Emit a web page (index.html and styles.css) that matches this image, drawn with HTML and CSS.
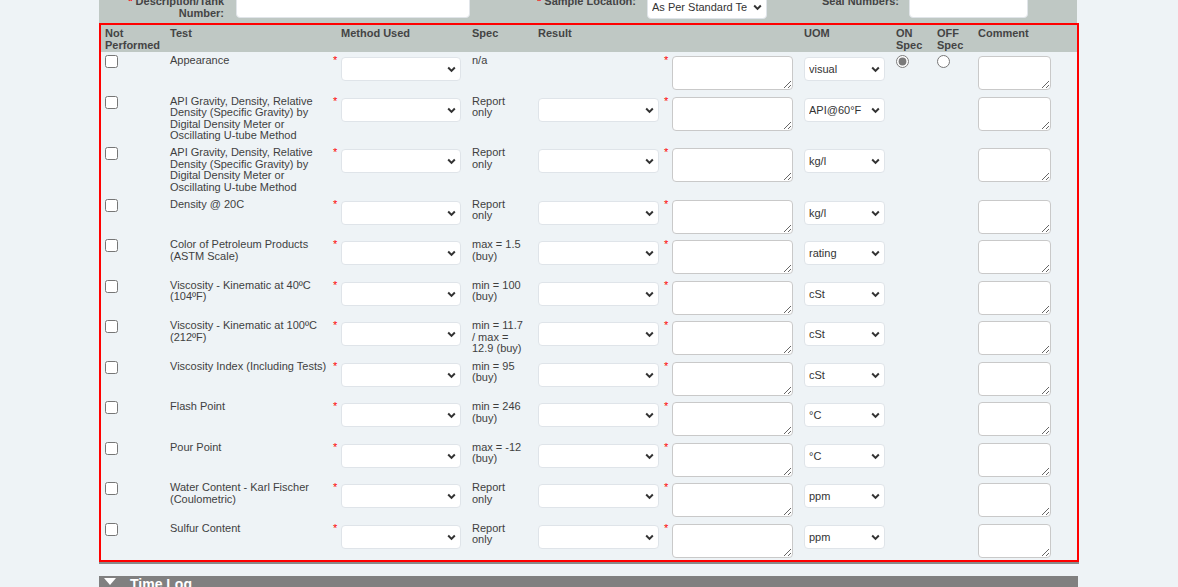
FILE: index.html
```html
<!DOCTYPE html>
<html lang="en">
<head>
<meta charset="utf-8">
<title>Test Results</title>
<link rel="stylesheet" href="styles.css">
</head>
<body>
<div class="page">
  <div class="topbar">
    <div class="tlabel l1"><span class="req">*</span> Description/Tank Number:</div>
    <input class="tinput i1" type="text">
    <div class="tlabel l2"><span class="req">*</span> Sample Location:</div>
    <div class="sel tsel">
      <select class="selbox"><option>As Per Standard Terminal Procedure</option></select>
      <svg class="chev" viewBox="0 0 10 7"><path d="M1.3 1.3 L5 5 L8.7 1.3"/></svg>
    </div>
    <div class="tlabel l3">Seal Numbers:</div>
    <input class="tinput i3" type="text">
  </div>

  <div class="grid">
    <div class="row head">
      <div class="c">Not Performed</div>
      <div class="c">Test</div>
      <div class="c"></div>
      <div class="c p0">Method Used</div>
      <div class="c">Spec</div>
      <div class="c">Result</div>
      <div class="c"></div>
      <div class="c p0"></div>
      <div class="c">UOM</div>
      <div class="c">ON Spec</div>
      <div class="c">OFF Spec</div>
      <div class="c">Comment</div>
    </div>

    <div class="row brow">
      <div class="c"><input type="checkbox" class="cb"></div>
      <div class="c test">Appearance</div>
      <div class="c ast">*</div>
      <div class="c p0"><div class="sel w120"><select class="selbox"><option></option></select><svg class="chev" viewBox="0 0 10 7"><path d="M1.3 1.3 L5 5 L8.7 1.3"/></svg></div></div>
      <div class="c spec">n/a</div>
      <div class="c"></div>
      <div class="c ast a2">*</div>
      <div class="c p0"><textarea class="ta w121"></textarea></div>
      <div class="c"><div class="sel w81"><select class="selbox"><option>visual</option></select><svg class="chev" viewBox="0 0 10 7"><path d="M1.3 1.3 L5 5 L8.7 1.3"/></svg></div></div>
      <div class="c"><input type="radio" name="spec1" class="rd" checked></div>
      <div class="c"><input type="radio" name="spec1" class="rd"></div>
      <div class="c"><textarea class="ta w73"></textarea></div>
    </div>

    <div class="row brow">
      <div class="c"><input type="checkbox" class="cb"></div>
      <div class="c test">API Gravity, Density, Relative Density (Specific Gravity) by Digital Density Meter or Oscillating U-tube Method</div>
      <div class="c ast">*</div>
      <div class="c p0"><div class="sel w120"><select class="selbox"><option></option></select><svg class="chev" viewBox="0 0 10 7"><path d="M1.3 1.3 L5 5 L8.7 1.3"/></svg></div></div>
      <div class="c spec">Report only</div>
      <div class="c"><div class="sel w121"><select class="selbox"><option></option></select><svg class="chev" viewBox="0 0 10 7"><path d="M1.3 1.3 L5 5 L8.7 1.3"/></svg></div></div>
      <div class="c ast a2">*</div>
      <div class="c p0"><textarea class="ta w121"></textarea></div>
      <div class="c"><div class="sel w81"><select class="selbox"><option>API@60°F</option></select><svg class="chev" viewBox="0 0 10 7"><path d="M1.3 1.3 L5 5 L8.7 1.3"/></svg></div></div>
      <div class="c"></div>
      <div class="c"></div>
      <div class="c"><textarea class="ta w73"></textarea></div>
    </div>

    <div class="row brow">
      <div class="c"><input type="checkbox" class="cb"></div>
      <div class="c test">API Gravity, Density, Relative Density (Specific Gravity) by Digital Density Meter or Oscillating U-tube Method</div>
      <div class="c ast">*</div>
      <div class="c p0"><div class="sel w120"><select class="selbox"><option></option></select><svg class="chev" viewBox="0 0 10 7"><path d="M1.3 1.3 L5 5 L8.7 1.3"/></svg></div></div>
      <div class="c spec">Report only</div>
      <div class="c"><div class="sel w121"><select class="selbox"><option></option></select><svg class="chev" viewBox="0 0 10 7"><path d="M1.3 1.3 L5 5 L8.7 1.3"/></svg></div></div>
      <div class="c ast a2">*</div>
      <div class="c p0"><textarea class="ta w121"></textarea></div>
      <div class="c"><div class="sel w81"><select class="selbox"><option>kg/l</option></select><svg class="chev" viewBox="0 0 10 7"><path d="M1.3 1.3 L5 5 L8.7 1.3"/></svg></div></div>
      <div class="c"></div>
      <div class="c"></div>
      <div class="c"><textarea class="ta w73"></textarea></div>
    </div>

    <div class="row brow">
      <div class="c"><input type="checkbox" class="cb"></div>
      <div class="c test">Density @ 20C</div>
      <div class="c ast">*</div>
      <div class="c p0"><div class="sel w120"><select class="selbox"><option></option></select><svg class="chev" viewBox="0 0 10 7"><path d="M1.3 1.3 L5 5 L8.7 1.3"/></svg></div></div>
      <div class="c spec">Report only</div>
      <div class="c"><div class="sel w121"><select class="selbox"><option></option></select><svg class="chev" viewBox="0 0 10 7"><path d="M1.3 1.3 L5 5 L8.7 1.3"/></svg></div></div>
      <div class="c ast a2">*</div>
      <div class="c p0"><textarea class="ta w121"></textarea></div>
      <div class="c"><div class="sel w81"><select class="selbox"><option>kg/l</option></select><svg class="chev" viewBox="0 0 10 7"><path d="M1.3 1.3 L5 5 L8.7 1.3"/></svg></div></div>
      <div class="c"></div>
      <div class="c"></div>
      <div class="c"><textarea class="ta w73"></textarea></div>
    </div>

    <div class="row brow">
      <div class="c"><input type="checkbox" class="cb"></div>
      <div class="c test">Color of Petroleum Products (ASTM Scale)</div>
      <div class="c ast">*</div>
      <div class="c p0"><div class="sel w120"><select class="selbox"><option></option></select><svg class="chev" viewBox="0 0 10 7"><path d="M1.3 1.3 L5 5 L8.7 1.3"/></svg></div></div>
      <div class="c spec">max = 1.5 (buy)</div>
      <div class="c"><div class="sel w121"><select class="selbox"><option></option></select><svg class="chev" viewBox="0 0 10 7"><path d="M1.3 1.3 L5 5 L8.7 1.3"/></svg></div></div>
      <div class="c ast a2">*</div>
      <div class="c p0"><textarea class="ta w121"></textarea></div>
      <div class="c"><div class="sel w81"><select class="selbox"><option>rating</option></select><svg class="chev" viewBox="0 0 10 7"><path d="M1.3 1.3 L5 5 L8.7 1.3"/></svg></div></div>
      <div class="c"></div>
      <div class="c"></div>
      <div class="c"><textarea class="ta w73"></textarea></div>
    </div>

    <div class="row brow">
      <div class="c"><input type="checkbox" class="cb"></div>
      <div class="c test">Viscosity - Kinematic at 40ºC (104ºF)</div>
      <div class="c ast">*</div>
      <div class="c p0"><div class="sel w120"><select class="selbox"><option></option></select><svg class="chev" viewBox="0 0 10 7"><path d="M1.3 1.3 L5 5 L8.7 1.3"/></svg></div></div>
      <div class="c spec">min = 100 (buy)</div>
      <div class="c"><div class="sel w121"><select class="selbox"><option></option></select><svg class="chev" viewBox="0 0 10 7"><path d="M1.3 1.3 L5 5 L8.7 1.3"/></svg></div></div>
      <div class="c ast a2">*</div>
      <div class="c p0"><textarea class="ta w121"></textarea></div>
      <div class="c"><div class="sel w81"><select class="selbox"><option>cSt</option></select><svg class="chev" viewBox="0 0 10 7"><path d="M1.3 1.3 L5 5 L8.7 1.3"/></svg></div></div>
      <div class="c"></div>
      <div class="c"></div>
      <div class="c"><textarea class="ta w73"></textarea></div>
    </div>

    <div class="row brow">
      <div class="c"><input type="checkbox" class="cb"></div>
      <div class="c test">Viscosity - Kinematic at 100ºC (212ºF)</div>
      <div class="c ast">*</div>
      <div class="c p0"><div class="sel w120"><select class="selbox"><option></option></select><svg class="chev" viewBox="0 0 10 7"><path d="M1.3 1.3 L5 5 L8.7 1.3"/></svg></div></div>
      <div class="c spec">min = 11.7 / max = 12.9 (buy)</div>
      <div class="c"><div class="sel w121"><select class="selbox"><option></option></select><svg class="chev" viewBox="0 0 10 7"><path d="M1.3 1.3 L5 5 L8.7 1.3"/></svg></div></div>
      <div class="c ast a2">*</div>
      <div class="c p0"><textarea class="ta w121"></textarea></div>
      <div class="c"><div class="sel w81"><select class="selbox"><option>cSt</option></select><svg class="chev" viewBox="0 0 10 7"><path d="M1.3 1.3 L5 5 L8.7 1.3"/></svg></div></div>
      <div class="c"></div>
      <div class="c"></div>
      <div class="c"><textarea class="ta w73"></textarea></div>
    </div>

    <div class="row brow">
      <div class="c"><input type="checkbox" class="cb"></div>
      <div class="c test">Viscosity Index (Including Tests)</div>
      <div class="c ast">*</div>
      <div class="c p0"><div class="sel w120"><select class="selbox"><option></option></select><svg class="chev" viewBox="0 0 10 7"><path d="M1.3 1.3 L5 5 L8.7 1.3"/></svg></div></div>
      <div class="c spec">min = 95 (buy)</div>
      <div class="c"><div class="sel w121"><select class="selbox"><option></option></select><svg class="chev" viewBox="0 0 10 7"><path d="M1.3 1.3 L5 5 L8.7 1.3"/></svg></div></div>
      <div class="c ast a2">*</div>
      <div class="c p0"><textarea class="ta w121"></textarea></div>
      <div class="c"><div class="sel w81"><select class="selbox"><option>cSt</option></select><svg class="chev" viewBox="0 0 10 7"><path d="M1.3 1.3 L5 5 L8.7 1.3"/></svg></div></div>
      <div class="c"></div>
      <div class="c"></div>
      <div class="c"><textarea class="ta w73"></textarea></div>
    </div>

    <div class="row brow">
      <div class="c"><input type="checkbox" class="cb"></div>
      <div class="c test">Flash Point</div>
      <div class="c ast">*</div>
      <div class="c p0"><div class="sel w120"><select class="selbox"><option></option></select><svg class="chev" viewBox="0 0 10 7"><path d="M1.3 1.3 L5 5 L8.7 1.3"/></svg></div></div>
      <div class="c spec">min = 246 (buy)</div>
      <div class="c"><div class="sel w121"><select class="selbox"><option></option></select><svg class="chev" viewBox="0 0 10 7"><path d="M1.3 1.3 L5 5 L8.7 1.3"/></svg></div></div>
      <div class="c ast a2">*</div>
      <div class="c p0"><textarea class="ta w121"></textarea></div>
      <div class="c"><div class="sel w81"><select class="selbox"><option>°C</option></select><svg class="chev" viewBox="0 0 10 7"><path d="M1.3 1.3 L5 5 L8.7 1.3"/></svg></div></div>
      <div class="c"></div>
      <div class="c"></div>
      <div class="c"><textarea class="ta w73"></textarea></div>
    </div>

    <div class="row brow">
      <div class="c"><input type="checkbox" class="cb"></div>
      <div class="c test">Pour Point</div>
      <div class="c ast">*</div>
      <div class="c p0"><div class="sel w120"><select class="selbox"><option></option></select><svg class="chev" viewBox="0 0 10 7"><path d="M1.3 1.3 L5 5 L8.7 1.3"/></svg></div></div>
      <div class="c spec">max = -12 (buy)</div>
      <div class="c"><div class="sel w121"><select class="selbox"><option></option></select><svg class="chev" viewBox="0 0 10 7"><path d="M1.3 1.3 L5 5 L8.7 1.3"/></svg></div></div>
      <div class="c ast a2">*</div>
      <div class="c p0"><textarea class="ta w121"></textarea></div>
      <div class="c"><div class="sel w81"><select class="selbox"><option>°C</option></select><svg class="chev" viewBox="0 0 10 7"><path d="M1.3 1.3 L5 5 L8.7 1.3"/></svg></div></div>
      <div class="c"></div>
      <div class="c"></div>
      <div class="c"><textarea class="ta w73"></textarea></div>
    </div>

    <div class="row brow">
      <div class="c"><input type="checkbox" class="cb"></div>
      <div class="c test">Water Content - Karl Fischer (Coulometric)</div>
      <div class="c ast">*</div>
      <div class="c p0"><div class="sel w120"><select class="selbox"><option></option></select><svg class="chev" viewBox="0 0 10 7"><path d="M1.3 1.3 L5 5 L8.7 1.3"/></svg></div></div>
      <div class="c spec">Report only</div>
      <div class="c"><div class="sel w121"><select class="selbox"><option></option></select><svg class="chev" viewBox="0 0 10 7"><path d="M1.3 1.3 L5 5 L8.7 1.3"/></svg></div></div>
      <div class="c ast a2">*</div>
      <div class="c p0"><textarea class="ta w121"></textarea></div>
      <div class="c"><div class="sel w81"><select class="selbox"><option>ppm</option></select><svg class="chev" viewBox="0 0 10 7"><path d="M1.3 1.3 L5 5 L8.7 1.3"/></svg></div></div>
      <div class="c"></div>
      <div class="c"></div>
      <div class="c"><textarea class="ta w73"></textarea></div>
    </div>

    <div class="row brow">
      <div class="c"><input type="checkbox" class="cb"></div>
      <div class="c test">Sulfur Content</div>
      <div class="c ast">*</div>
      <div class="c p0"><div class="sel w120"><select class="selbox"><option></option></select><svg class="chev" viewBox="0 0 10 7"><path d="M1.3 1.3 L5 5 L8.7 1.3"/></svg></div></div>
      <div class="c spec">Report only</div>
      <div class="c"><div class="sel w121"><select class="selbox"><option></option></select><svg class="chev" viewBox="0 0 10 7"><path d="M1.3 1.3 L5 5 L8.7 1.3"/></svg></div></div>
      <div class="c ast a2">*</div>
      <div class="c p0"><textarea class="ta w121"></textarea></div>
      <div class="c"><div class="sel w81"><select class="selbox"><option>ppm</option></select><svg class="chev" viewBox="0 0 10 7"><path d="M1.3 1.3 L5 5 L8.7 1.3"/></svg></div></div>
      <div class="c"></div>
      <div class="c"></div>
      <div class="c"><textarea class="ta w73"></textarea></div>
    </div>
  </div>

  <div class="timelog">
    <span class="tri"></span>
    <span class="tltext">Time Log</span>
  </div>
</div>
</body>
</html>
```

FILE: styles.css
```css
* { box-sizing: border-box; }

html, body {
  margin: 0;
  background: #eef3f6;
  font-family: "Liberation Sans", Arial, sans-serif;
  font-size: 11px;
  color: #444;
}

.page {
  width: 980px;
  margin: -8px auto 0;
}

/* top form strip */
.topbar {
  display: flex;
  align-items: flex-start;
  background: #bfc8c4;
  padding: 1px 0 4px;
  width: 978px;
}

.tlabel {
  font-weight: bold;
  text-align: right;
  line-height: 12px;
  margin-top: 1.5px;
  color: #444;
}

.req { color: #ff0000; }

.l1 { width: 125px; }
.l2 { width: 166px; }
.l3 { width: 132px; }

.tinput {
  height: 24px;
  margin-top: 1px;
  background: #fff;
  border: 1px solid #e1e5e9;
  border-radius: 4px;
  outline: none;
}

.i1 { width: 234px; margin-left: 12px; }
.i3 { width: 119px; margin-left: 10px; }

.tsel {
  width: 120px;
  margin-left: 11px;
  margin-top: 2px;
}

/* custom select */
.sel {
  position: relative;
  height: 24px;
}

.selbox {
  -webkit-appearance: none;
  appearance: none;
  width: 100%;
  height: 100%;
  margin: 0;
  padding: 0 19px 0 4px;
  background: #fff;
  border: 1px solid #dfe4e9;
  border-radius: 4px;
  font-family: "Liberation Sans", Arial, sans-serif;
  font-size: 11px;
  color: #333;
  outline: none;
}

.chev {
  position: absolute;
  right: 5px;
  top: 9px;
  width: 9px;
  height: 7px;
  fill: none;
  stroke: #333;
  stroke-width: 2.2;
  pointer-events: none;
}

.w120 { width: 120px; }
.w121 { width: 121px; }
.w81 { width: 81px; }
.w73 { width: 73px; }

/* results grid */
.grid {
  border: 2px solid #ff0000;
  box-shadow: 0 2px 0 #8a8a8a;
  background: #eef3f6;
}

.row {
  display: grid;
  grid-template-columns: 65px 163px 12px 127px 66px 127px 11px 128px 92px 41px 41px 103px;
}

.c { padding-left: 4px; }
.c.p0 { padding-left: 0; }
.c.a2 { padding-left: 3px; }

.head {
  background: #bfc8c4;
  font-weight: bold;
  line-height: 12.3px;
  padding-top: 2px;
  height: 26.7px;
  color: #444;
}

.brow {
  line-height: 11.5px;
  padding: 3.5px 0 2px;
  color: #3f3f3f;
}

.test { padding-right: 0; }
.spec { padding-right: 10px; }

.ast {
  color: #ff0000;
}

.cb {
  display: block;
  margin: 0;
  width: 13px;
  height: 13px;
}

.rd {
  display: block;
  margin: 0;
  width: 13px;
  height: 13px;
  accent-color: #7a7a7a;
}

.brow .sel { margin-top: 2px; }

.ta {
  display: block;
  margin: 1px 0 0;
  height: 34px;
  background: #fff;
  border: 1px solid #c9c9c9;
  border-radius: 4px;
  font-family: "Liberation Sans", Arial, sans-serif;
  font-size: 11px;
  outline: none;
}

/* time log bar */
.timelog {
  display: flex;
  align-items: flex-start;
  margin-top: 14px;
  height: 30px;
  padding-left: 5px;
  background: #808080;
  color: #fff;
  width: 979px;
}

.tri {
  width: 0;
  height: 0;
  margin-top: 2px;
  margin-right: 14px;
  border-left: 6px solid transparent;
  border-right: 6px solid transparent;
  border-top: 7px solid #fff;
}

.tltext {
  font-size: 14px;
  font-weight: bold;
  line-height: 16px;
}
```
